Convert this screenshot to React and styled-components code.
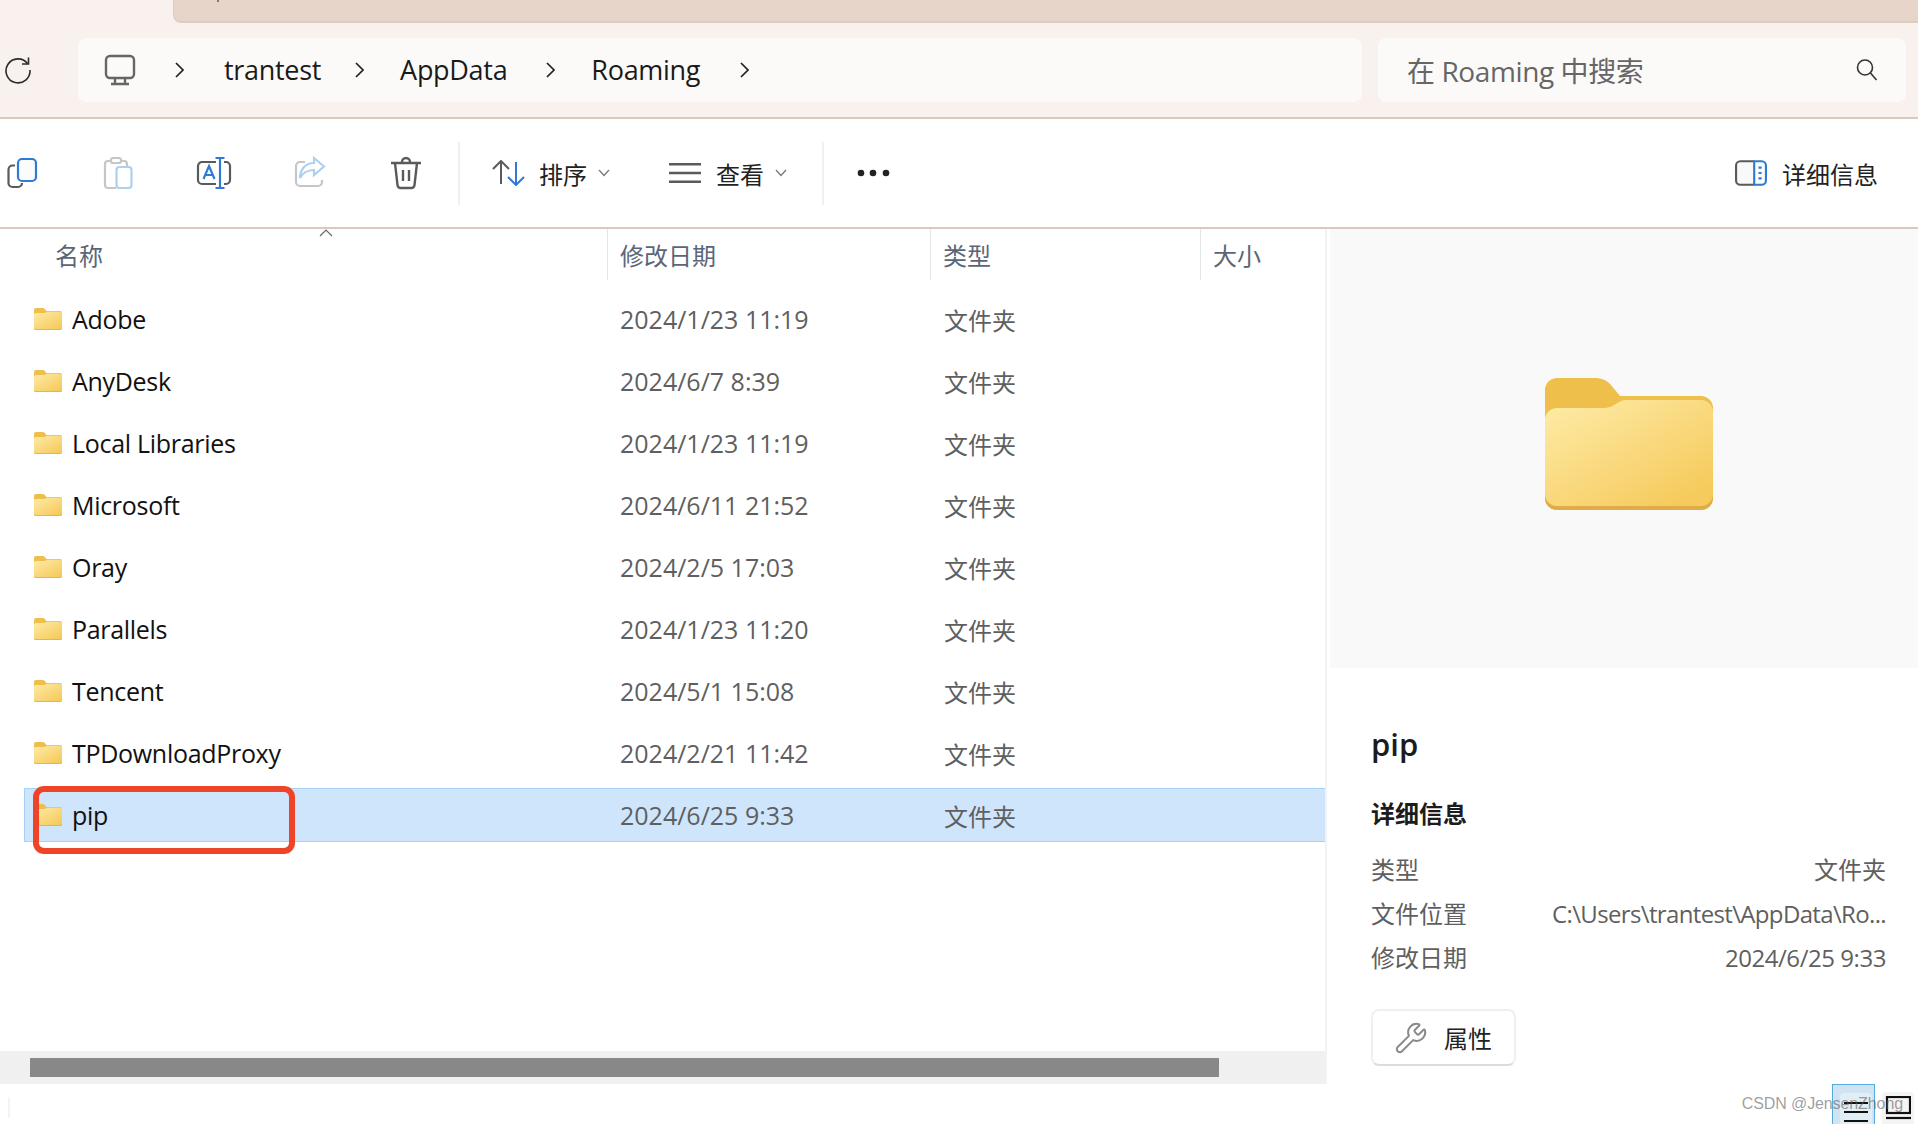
import React from 'react';
import styled, { createGlobalStyle } from 'styled-components';
import { Wrench } from 'lucide-react';

const GlobalStyle = createGlobalStyle`
  html, body {
    margin: 0;
    padding: 0;
    background: #fff;
  }
  body {
    font-family: "Open Sans", "Noto Sans CJK SC", sans-serif;
  }
`;

const Window = styled.div`
  position: relative;
  width: 1918px;
  height: 1124px;
  overflow: hidden;
  display: flex;
  flex-direction: column;
  background: #fff;
`;

const TabStrip = styled.div`
  height: 23px;
  padding-left: 173px;
  background: #f9f1ee;
  display: flex;
  flex-shrink: 0;
`;

const TabBar = styled.div`
  position: relative;
  flex: 1;
  background: #e8d5ca;
  border-bottom: 2px solid #e0cdc2;
  border-left: 1px solid #e0cdc2;
  border-bottom-left-radius: 8px;
  &::before {
    content: '';
    position: absolute;
    left: 43px;
    top: 0;
    width: 2px;
    height: 2px;
    background: #777;
  }
`;

const AddressBar = styled.div`
  height: 96px;
  padding: 15px 12px 0 78px;
  box-sizing: border-box;
  background: #f9f1ee;
  border-bottom: 2px solid #d9c9bf;
  display: flex;
  gap: 16px;
  position: relative;
  flex-shrink: 0;
`;

const RefreshSlot = styled.div`
  position: absolute;
  left: 4px;
  top: 33px;
  display: flex;
`;

const Breadcrumb = styled.div`
  width: 1284px;
  height: 64px;
  border-radius: 8px;
  background: #fcfaf8;
  display: flex;
  align-items: center;
  padding-left: 26px;
  box-sizing: border-box;
`;

const CrumbGap = styled.span`
  width: 39px;
`;

const Crumb = styled.span`
  font-size: 27px;
  color: #1a1a1a;
  margin: 0 ${p => p.$right}px 0 ${p => p.$left}px;
  letter-spacing: -0.3px;
  line-height: 64px;
`;

const SearchBox = styled.div`
  flex: 1;
  height: 64px;
  border-radius: 8px;
  background: #fcfaf8;
  display: flex;
  align-items: center;
  justify-content: space-between;
  padding: 0 27px 0 29px;
  box-sizing: border-box;
  font-size: 28px;
  letter-spacing: -0.4px;
  color: #666;
`;

const Toolbar = styled.div`
  height: 110px;
  box-sizing: border-box;
  border-bottom: 2px solid #d9c9bf;
  display: flex;
  align-items: center;
  background: #fff;
  flex-shrink: 0;
`;

const ToolButton = styled.div`
  width: 96px;
  height: 36px;
  display: flex;
  justify-content: center;
  flex-shrink: 0;
  &:first-child {
    margin-left: -26px;
  }
`;

const ToolSeparator = styled.div`
  width: 2px;
  height: 63px;
  background: #f0f0f0;
  margin-left: ${p => p.$left}px;
  flex-shrink: 0;
`;

const MenuButton = styled.div`
  display: flex;
  align-items: center;
  margin-left: ${p => p.$left}px;
  font-size: 24px;
  color: #222;
  flex-shrink: 0;
`;

const MenuLabel = styled.span`
  margin-left: ${p => p.$left}px;
  margin-right: 11px;
  line-height: 32px;
  padding-top: 3px;
`;

const MoreDots = styled.svg`
  margin-left: 33px;
`;

const DetailsToggle = styled.div`
  margin-left: auto;
  margin-right: 40px;
  display: flex;
  align-items: center;
  gap: 15px;
  font-size: 24px;
  color: #222;
`;

const Body = styled.div`
  flex: 1;
  display: flex;
  min-height: 0;
`;

const ListColumn = styled.div`
  width: 1327px;
  display: flex;
  flex-direction: column;
  flex-shrink: 0;
`;

const ListPane = styled.div`
  position: relative;
  flex: 1;
  display: flex;
  flex-direction: column;
  border-right: 2px solid #f3f3f3;
`;

const HeaderRow = styled.div`
  display: grid;
  grid-template-columns: 608px 323px 270px 1fr;
  height: 51px;
  margin-bottom: 12px;
  position: relative;
  font-size: 24px;
  color: #5a6678;
`;

const HeaderCell = styled.div`
  padding: 9px 0 0 ${p => p.$pad}px;
  line-height: 36px;
  box-sizing: border-box;
  border-right: ${p => (p.$last ? 'none' : '1px solid #e5e5e5')};
`;

const SortCaret = styled.svg`
  position: absolute;
  left: 319px;
  top: 0;
`;

const Row = styled.div`
  display: grid;
  grid-template-columns: 584px 323px 270px 1fr;
  align-items: center;
  height: 54px;
  margin: 0 0 8px 24px;
  box-sizing: border-box;
  border: 1px solid ${p => (p.$selected ? '#a8d1f8' : 'transparent')};
  border-right: none;
  background: ${p => (p.$selected ? '#cfe5fc' : 'transparent')};
`;

const NameCell = styled.div`
  display: flex;
  align-items: center;
  gap: 10px;
  padding-left: 9px;
  font-size: 25px;
  color: #111;
  letter-spacing: -0.3px;
`;

const RowCell = styled.div`
  font-size: 24px;
  color: #5f5f5f;
  padding-left: 12px;
`;

const DateCell = styled(RowCell)`
  font-size: 25px;
  padding-left: 11px;
`;

const Highlight = styled.div`
  position: absolute;
  left: 33px;
  top: 557px;
  width: 262px;
  height: 68px;
  box-sizing: border-box;
  border: 6px solid #ee4528;
  border-radius: 11px;
`;

const ScrollTrack = styled.div`
  margin-top: auto;
  height: 33px;
  background: #f0f0f0;
  padding: 7px 0 0 30px;
  box-sizing: border-box;
`;

const ScrollThumb = styled.div`
  width: 1189px;
  height: 19px;
  background: #888;
`;

const StatusBar = styled.div`
  height: 40px;
  padding: 13px 0 0 8px;
  box-sizing: border-box;
`;

const StatusMark = styled.div`
  width: 2px;
  height: 21px;
  background: #f4f4f4;
`;

const DetailPanel = styled.div`
  flex: 1;
  display: flex;
  flex-direction: column;
  padding-left: 3px;
`;

const Preview = styled.div`
  height: 439px;
  background: #f9f9f9;
  display: flex;
  align-items: center;
  justify-content: center;
  padding: 0 0 10px 10px;
  box-sizing: border-box;
`;

const DetailBody = styled.div`
  padding: 52px 32px 0 41px;
`;

const FileTitle = styled.div`
  font-size: 31px;
  font-weight: 600;
  line-height: 48px;
  color: #1c1c1c;
`;

const SectionTitle = styled.div`
  font-size: 24px;
  font-weight: 700;
  line-height: 36px;
  color: #1c1c1c;
  margin: 28px 0 20px;
`;

const PropRow = styled.div`
  display: flex;
  justify-content: space-between;
  height: 44px;
  line-height: 36px;
  font-size: 24px;
  color: #5f5f5f;
  white-space: nowrap;
`;

const PropValue = styled.span`
  letter-spacing: ${p => p.$spacing || 0}px;
`;

const PropsButton = styled.div`
  margin-top: 25px;
  width: 145px;
  height: 57px;
  box-sizing: border-box;
  border: 2px solid #f0f0f0;
  border-bottom-color: #dcdcdc;
  border-radius: 8px;
  background: #fff;
  display: flex;
  align-items: center;
  gap: 16px;
  padding-left: 21px;
  font-size: 24px;
  color: #222;
`;

const WrenchIcon = styled(Wrench)`
  color: #8a8a8a;
  flex-shrink: 0;
`;

const ViewSwitch = styled.div`
  position: absolute;
  right: 4px;
  bottom: 0;
  display: flex;
  align-items: flex-end;
  gap: 7px;
`;

const ListViewButton = styled.div`
  width: 43px;
  height: 40px;
  box-sizing: border-box;
  background: #cfe3f2;
  border: 1px solid #55aade;
  border-bottom: none;
  padding: 8px 2px 0 7px;
  display: flex;
`;

const ViewInner = styled.div`
  flex: 1;
  background: ${p => p.$bg};
  border-radius: 4px 4px 0 0;
  display: flex;
  justify-content: center;
  padding-top: ${p => p.$top}px;
`;

const IconViewButton = styled.div`
  width: 32px;
  height: 32px;
  background: #f4f4f4;
  border-radius: 4px 4px 0 0;
  display: flex;
  justify-content: center;
  padding-top: 4px;
  box-sizing: border-box;
`;

const Watermark = styled.div`
  position: absolute;
  right: 15px;
  bottom: 8px;
  font-family: "Liberation Sans", sans-serif;
  font-size: 16px;
  letter-spacing: -0.1px;
  line-height: 24px;
  color: rgba(95, 95, 95, 0.62);
`;

const Gray = '#5a5a5a';
const Blue = '#2f7ad6';

const Chevron = () => (
  <svg width="9" height="16" viewBox="0 0 9 16" fill="none" stroke="#222" strokeWidth="1.7">
    <path d="M1 1l7 7-7 7" />
  </svg>
);

const CaretDown = () => (
  <svg width="12" height="8" viewBox="0 0 12 8" fill="none" stroke="#777" strokeWidth="1.3">
    <path d="M1 1l5 5.5L11 1" />
  </svg>
);

const Folder = ({ w, h }) => (
  <svg width={w} height={h} viewBox="0 0 168 132">
    <defs>
      <linearGradient id="folderFace" x1="0.1" y1="0.1" x2="0.85" y2="0.95">
        <stop offset="0" stopColor="#fde8a0" />
        <stop offset="1" stopColor="#f6ca5c" />
      </linearGradient>
    </defs>
    <path
      d="M0 12a12 12 0 0 1 12-12H52a20 20 0 0 1 14 7L75 18H156a12 12 0 0 1 12 12V120a12 12 0 0 1-12 12H12a12 12 0 0 1-12-12Z"
      fill="#efbf4c"
    />
    <path d="M0 116H168V120a12 12 0 0 1-12 12H12a12 12 0 0 1-12-12Z" fill="#e0ac4a" />
    <path
      d="M0 42a12 12 0 0 1 12-12H60a14 14 0 0 0 9-3L74 24a12 12 0 0 1 7-2H156a12 12 0 0 1 12 12V116a12 12 0 0 1-12 12H12a12 12 0 0 1-12-12Z"
      fill="url(#folderFace)"
    />
  </svg>
);

const files = [
  { name: 'Adobe', date: '2024/1/23 11:19' },
  { name: 'AnyDesk', date: '2024/6/7 8:39' },
  { name: 'Local Libraries', date: '2024/1/23 11:19' },
  { name: 'Microsoft', date: '2024/6/11 21:52' },
  { name: 'Oray', date: '2024/2/5 17:03' },
  { name: 'Parallels', date: '2024/1/23 11:20' },
  { name: 'Tencent', date: '2024/5/1 15:08' },
  { name: 'TPDownloadProxy', date: '2024/2/21 11:42' },
  { name: 'pip', date: '2024/6/25 9:33', selected: true },
];

const App = () => (
  <Window>
    <GlobalStyle />
    <TabStrip>
      <TabBar />
    </TabStrip>

    <AddressBar>
      <RefreshSlot>
        <svg width="28" height="28" viewBox="0 0 28 28" fill="none" stroke="#2b2b2b" strokeWidth="1.6">
          <path d="M23.5 7.5A12 12 0 1 0 26 14" />
          <path d="M24.5 1.5V8H18" />
        </svg>
      </RefreshSlot>
      <Breadcrumb>
        <svg width="32" height="32" viewBox="0 0 32 32" fill="none" stroke="#666" strokeWidth="2.4">
          <rect x="2" y="2" width="28" height="22" rx="4" />
          <path d="M11 25v4M21 25v4M7 30h18" />
        </svg>
        <CrumbGap />
        <Chevron />
        <Crumb $left={40} $right={34}>trantest</Crumb>
        <Chevron />
        <Crumb $left={36} $right={39}>AppData</Crumb>
        <Chevron />
        <Crumb $left={36} $right={40}>Roaming</Crumb>
        <Chevron />
      </Breadcrumb>
      <SearchBox>
        <span>在 Roaming 中搜索</span>
        <svg width="24" height="24" viewBox="0 0 24 24" fill="none" stroke="#333" strokeWidth="1.6">
          <circle cx="10" cy="9.5" r="7.5" />
          <path d="M15.5 15l6 7" />
        </svg>
      </SearchBox>
    </AddressBar>

    <Toolbar>
      <ToolButton>
        <svg width="36" height="36" viewBox="0 0 36 36" fill="none" strokeWidth="2.2">
          <path d="M11 10.5H8.500a4 4 0 0 0-4 4V28a4 4 0 0 0 4 4H14a4 4 0 0 0 4-4" stroke={Gray} />
          <rect x="14" y="4" width="18" height="22" rx="4" stroke={Blue} fill="#fbfbfb" />
        </svg>
      </ToolButton>
      <ToolButton>
        <svg width="36" height="36" viewBox="0 0 36 36" fill="none" strokeWidth="2.2">
          <path d="M11 6H8a3 3 0 0 0-3 3V30a3 3 0 0 0 3 3H16M21 6h3a3 3 0 0 1 3 3v3" stroke="#c6c6c6" />
          <rect x="11" y="3" width="10" height="5" rx="2" stroke="#c6c6c6" />
          <rect x="16.500" y="12" width="15" height="21" rx="3" stroke="#aed0ef" />
        </svg>
      </ToolButton>
      <ToolButton>
        <svg width="36" height="36" viewBox="0 0 36 36" fill="none" strokeWidth="2.2">
          <path d="M20 7H6a4 4 0 0 0-4 4V25a4 4 0 0 0 4 4H20M28 7h2a4 4 0 0 1 4 4v14a4 4 0 0 1-4 4h-2" stroke={Gray} />
          <path d="M24 3V33M19.500 3H28.500M19.500 33H28.500" stroke={Blue} />
          <path d="M7.500 24L13 11L18.500 24M9.500 20H16.500" stroke={Blue} />
        </svg>
      </ToolButton>
      <ToolButton>
        <svg width="36" height="36" viewBox="0 0 36 36" fill="none" strokeWidth="2.2">
          <path d="M13 7H8a4 4 0 0 0-4 4V27a4 4 0 0 0 4 4H26a4 4 0 0 0 4-4V25" stroke="#c6c6c6" />
          <path d="M22 3L32 11.500L22 20V15C15 15 10 19 8 23C8 15 13 8 22 8Z" stroke="#aed0ef" />
        </svg>
      </ToolButton>
      <ToolButton>
        <svg width="36" height="36" viewBox="0 0 36 36" fill="none" stroke={Gray} strokeWidth="2.4">
          <path d="M3 8H33M14 7a4 4 0 0 1 8 0" />
          <path d="M7 8L9.500 30a3 3 0 0 0 3 3H23.500a3 3 0 0 0 3-3L29 8" />
          <path d="M15 15V26M21 15V26" />
        </svg>
      </ToolButton>
      <ToolSeparator $left={4} />
      <MenuButton $left={32}>
        <svg width="34" height="26" viewBox="0 0 34 26" fill="none" strokeWidth="2">
          <path d="M9 1V24M1 9L9 1L17 9" stroke={Gray} />
          <path d="M24 2V25M16 17L24 25L32 17" stroke={Blue} />
        </svg>
        <MenuLabel $left={13}>排序</MenuLabel>
        <CaretDown />
      </MenuButton>
      <MenuButton $left={59}>
        <svg width="32" height="22" viewBox="0 0 33 22" fill="none" stroke={Gray} strokeWidth="2.4">
          <path d="M0 2H33M0 11H33M0 20H33" />
        </svg>
        <MenuLabel $left={15}>查看</MenuLabel>
        <CaretDown />
      </MenuButton>
      <ToolSeparator $left={35} />
      <MoreDots width="33" height="8" viewBox="0 0 33 8" fill="#222">
        <circle cx="4" cy="4" r="3.300" />
        <circle cx="16" cy="4" r="3.300" />
        <circle cx="29" cy="4" r="3.300" />
      </MoreDots>
      <DetailsToggle>
        <svg width="32" height="26" viewBox="0 0 30 24" fill="none" strokeWidth="2">
          <path d="M18 1H5a4 4 0 0 0-4 4V19a4 4 0 0 0 4 4H18" stroke={Gray} fill="#f9f9f9" />
          <path d="M18 1H25a4 4 0 0 1 4 4V19a4 4 0 0 1-4 4H18Z" stroke={Blue} />
          <path d="M22 7H25M22 12H25M22 17H25" stroke={Blue} />
        </svg>
        <span>详细信息</span>
      </DetailsToggle>
    </Toolbar>

    <Body>
      <ListColumn>
        <ListPane>
          <HeaderRow>
            <HeaderCell $pad={55}>名称</HeaderCell>
            <HeaderCell $pad={12}>修改日期</HeaderCell>
            <HeaderCell $pad={12}>类型</HeaderCell>
            <HeaderCell $pad={12} $last>大小</HeaderCell>
            <SortCaret width="14" height="8" viewBox="0 0 14 8" fill="none" stroke="#666" strokeWidth="1.200">
              <path d="M1 7L7 1L13 7" />
            </SortCaret>
          </HeaderRow>
          {files.map(file => (
            <Row key={file.name} $selected={file.selected}>
              <NameCell>
                <Folder w={28} h={22} />
                <span>{file.name}</span>
              </NameCell>
              <DateCell>{file.date}</DateCell>
              <RowCell>文件夹</RowCell>
            </Row>
          ))}
          <Highlight />
          <ScrollTrack>
            <ScrollThumb />
          </ScrollTrack>
        </ListPane>
        <StatusBar>
          <StatusMark />
        </StatusBar>
      </ListColumn>

      <DetailPanel>
        <Preview>
          <Folder w={168} h={132} />
        </Preview>
        <DetailBody>
          <FileTitle>pip</FileTitle>
          <SectionTitle>详细信息</SectionTitle>
          <PropRow>
            <span>类型</span>
            <PropValue>文件夹</PropValue>
          </PropRow>
          <PropRow>
            <span>文件位置</span>
            <PropValue $spacing={-0.65}>C:\Users\trantest\AppData\Ro...</PropValue>
          </PropRow>
          <PropRow>
            <span>修改日期</span>
            <PropValue $spacing={-0.45}>2024/6/25 9:33</PropValue>
          </PropRow>
          <PropsButton>
            <WrenchIcon size={34} strokeWidth={1.4} />
            <span>属性</span>
          </PropsButton>
        </DetailBody>
      </DetailPanel>
    </Body>

    <ViewSwitch>
      <ListViewButton>
        <ViewInner $bg="#e2eef6" $top={8}>
          <svg width="26" height="22" viewBox="0 0 26 22" stroke="#111" strokeWidth="2.200">
            <path d="M1 2H25M1 11H25M1 20H25" />
          </svg>
        </ViewInner>
      </ListViewButton>
      <IconViewButton>
        <svg width="26" height="24" viewBox="0 0 26 24" fill="none" stroke="#111" strokeWidth="2.200">
          <rect x="2" y="1" width="23" height="16" />
          <path d="M1 22H26" />
        </svg>
      </IconViewButton>
    </ViewSwitch>
    <Watermark>CSDN @JensenZhong</Watermark>
  </Window>
);

export default App;
